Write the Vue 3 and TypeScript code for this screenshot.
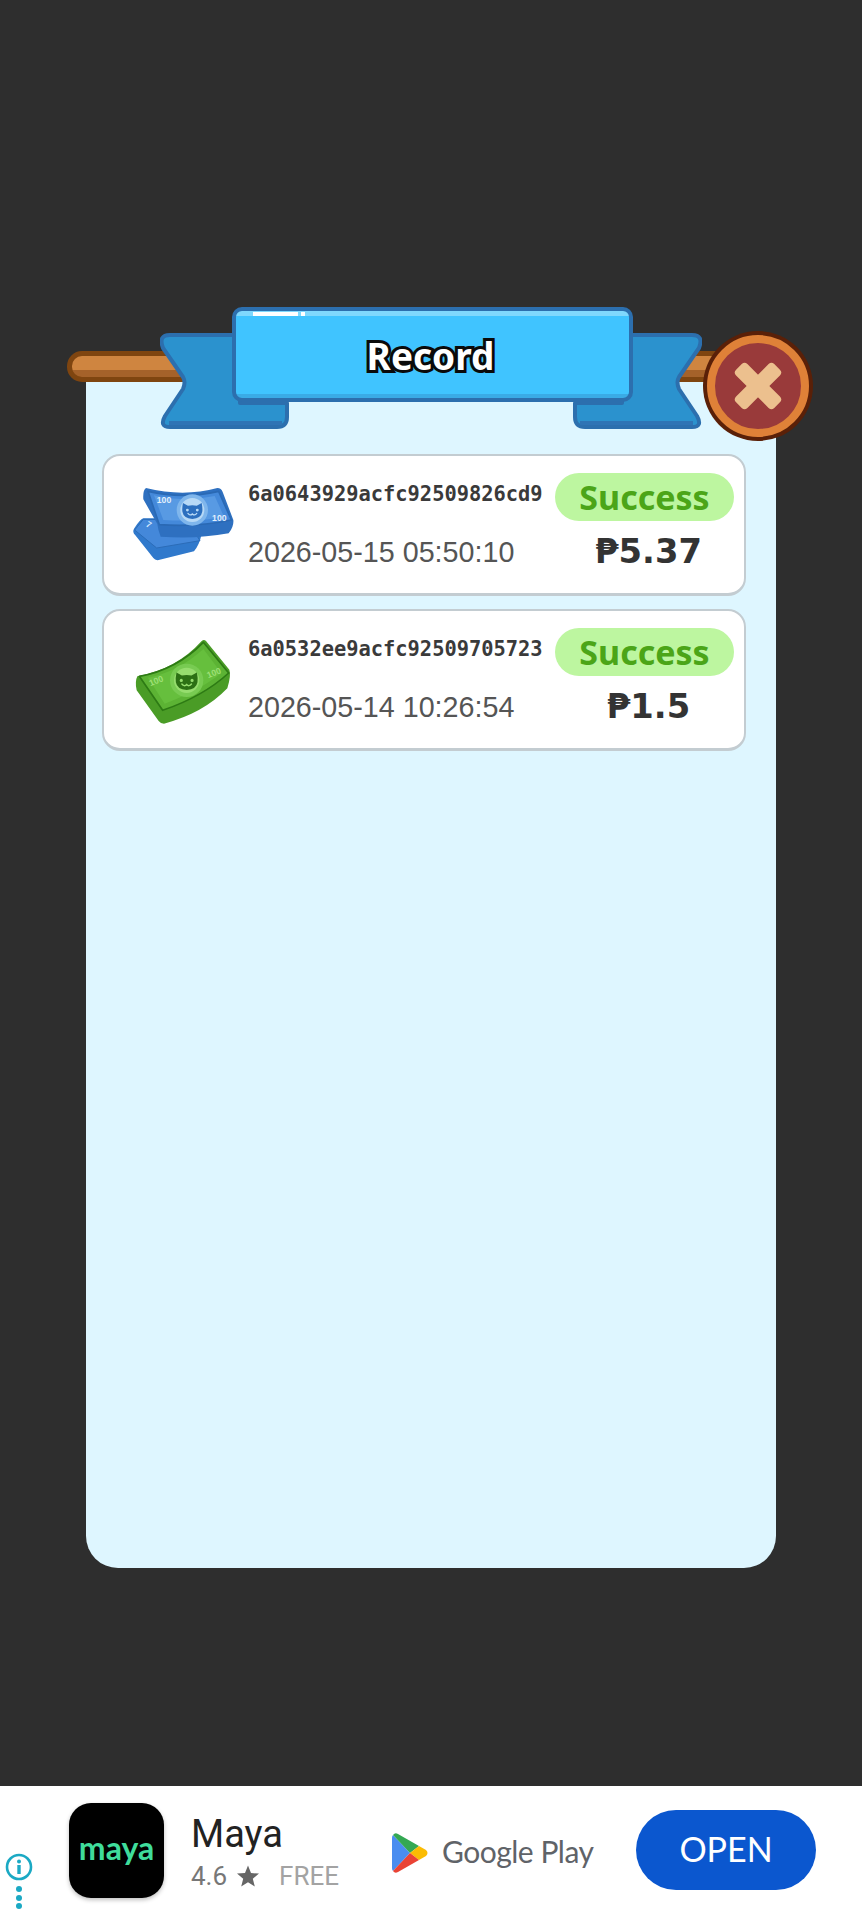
<script setup lang="ts">
interface RecordRow {
  id: string
  time: string
  amount: string
  tone: 'blue' | 'green'
}
const rows: RecordRow[] = [
  { id: '6a0643929acfc92509826cd9', time: '2026-05-15 05:50:10', amount: '₱5.37', tone: 'blue' },
  { id: '6a0532ee9acfc92509705723', time: '2026-05-14 10:26:54', amount: '₱1.5', tone: 'green' },
]
const catPath = 'M-17 -14 L-8 -9 Q0 -11 8 -9 L17 -14 Q19 -4 18 2 Q16 14 0 15 Q-16 14 -18 2 Q-19 -4 -17 -14 Z'
const tailPath = 'M10 2H80V70H127V84Q127 94 117 94H10Q-1 94 5 83L23 56Q26 49 23 44L3 15Q-2 2 10 2Z'
</script>

<template>
  <div class="screen">
    <main class="stage">
      <section class="panel">
        <div class="rod"></div>
        <svg class="tails" width="542" height="96" viewBox="0 0 542 96">
          <g>
            <path class="tail" :d="tailPath" />
            <path class="tail-edge" d="M9 90H122" />
          </g>
          <g transform="translate(542 0) scale(-1 1)">
            <path class="tail" :d="tailPath" />
            <path class="tail-edge" d="M9 90H122" />
          </g>
        </svg>
        <header class="banner">
          <i class="shine"></i><i class="shine-dot"></i>
          <h1>Record</h1>
        </header>
        <button class="close" aria-label="Close">
          <svg width="60" height="60" viewBox="0 0 60 60">
            <g fill="#ecc08e" transform="rotate(45 30 30)">
              <rect x="3" y="22" width="54" height="16" rx="4" />
              <rect x="22" y="3" width="16" height="54" rx="4" />
            </g>
          </svg>
        </button>

        <article v-for="row in rows" :key="row.id" class="card">
          <svg class="bill" width="120" height="110" viewBox="0 0 360 330">
            <template v-if="row.tone === 'blue'">
              <path d="M70 145Q60 148 42 176Q36 186 46 196L100 264Q106 272 116 270L222 244Q238 225 244 196L200 145Z" fill="#3079cc" />
              <path d="M70 148L44 180L110 234L240 212L200 150Z" fill="#4488da" stroke="#2b6cb8" stroke-width="3" stroke-linejoin="round" />
              <path d="M78 54Q190 82 292 54Q304 54 308 66L340 150Q342 170 326 190Q230 208 122 200Q114 180 112 162L70 88Q68 60 78 54Z" fill="#2e70c0" />
              <path d="M84 64Q190 88 296 64L334 150Q230 172 118 164Z" fill="#4489da" stroke="#2a69b4" stroke-width="5" stroke-linejoin="round" />
              <path d="M102 76Q190 98 284 78L312 140Q230 156 130 150Z" fill="#589ae3" />
              <circle cx="217" cy="120" r="47" fill="#7fb6ec" />
              <circle cx="217" cy="120" r="36" fill="#b7d9f6" />
              <g transform="translate(217 122) scale(1.65)">
                <path :d="catPath" fill="#2c6fbe" />
                <path d="M-8 5Q-4 10 0 6Q4 10 8 5" fill="none" stroke="#b7d9f6" stroke-width="2.4" stroke-linecap="round" />
                <circle cx="-9" cy="-1" r="2.6" fill="#b7d9f6" /><circle cx="9" cy="-1" r="2.6" fill="#b7d9f6" />
              </g>
              <text x="132" y="98" class="note" fill="#e2f0fd">100</text>
              <text x="298" y="152" class="note" fill="#e2f0fd">100</text>
              <text x="82" y="172" class="note" fill="#d3e7fb" transform="rotate(30 82 172)">7</text>
            </template>
            <template v-else>
              <path d="M52 154Q170 132 245 48Q252 42 258 48L328 134Q334 150 322 190Q250 265 132 296Q122 296 116 288L50 196Q44 170 52 154Z" fill="#4a9c26" />
              <path d="M58 154Q170 134 250 52L326 144Q250 214 128 256Z" fill="#5cb334" stroke="#2d7a14" stroke-width="5" stroke-linejoin="round" />
              <path d="M84 158Q176 140 250 72L304 144Q240 196 134 236Z" fill="#66bf3d" />
              <circle cx="200" cy="166" r="50" fill="#78cb52" />
              <circle cx="200" cy="166" r="38" fill="#96dd6e" />
              <g transform="translate(200 168) scale(1.8)">
                <path :d="catPath" fill="#2c7014" />
                <path d="M-8 5Q-4 10 0 6Q4 10 8 5" fill="none" stroke="#96dd6e" stroke-width="2.4" stroke-linecap="round" />
                <circle cx="-9" cy="-1" r="2.6" fill="#96dd6e" /><circle cx="9" cy="-1" r="2.6" fill="#96dd6e" />
              </g>
              <text x="112" y="176" class="note" fill="#9fe077" transform="rotate(-22 112 176)">100</text>
              <text x="285" y="152" class="note" fill="#9fe077" transform="rotate(-22 285 152)">100</text>
            </template>
          </svg>
          <div class="info">
            <p class="hash">{{ row.id }}</p>
            <p class="time">{{ row.time }}</p>
          </div>
          <div class="result">
            <span class="status">Success</span>
            <span class="amount">{{ row.amount }}</span>
          </div>
        </article>
      </section>
    </main>

    <footer class="ad">
      <div class="ad-marks">
        <svg width="28" height="28" viewBox="0 0 28 28">
          <circle cx="14" cy="14" r="12" fill="none" stroke="#1ba9c4" stroke-width="2.6" />
          <circle cx="14" cy="8.5" r="2" fill="#1ba9c4" />
          <path d="M14 12V21" fill="none" stroke="#1ba9c4" stroke-width="3.4" />
        </svg>
        <div class="dots"><i></i><i></i><i></i></div>
      </div>
      <div class="app-icon"><span>maya</span></div>
      <div class="app-info">
        <div class="app-name">Maya</div>
        <div class="app-meta">
          <span>4.6</span>
          <svg width="24" height="24" viewBox="0 0 24 24"><path d="M12 1.5L15 9L23 9.6L16.8 14.8L18.8 22.6L12 18.3L5.2 22.6L7.2 14.8L1 9.6L9 9Z" fill="#666" /></svg>
          <span class="free">FREE</span>
        </div>
      </div>
      <div class="play">
        <svg width="37" height="40" viewBox="0 0 37 40">
          <path d="M1 2Q0 3 0 5V35Q0 37 1 38L18 20Z" fill="#4a8df0" />
          <path d="M1 2Q3 -1 6 1L27 13L18 20Z" fill="#34a853" />
          <path d="M27 13L34 17Q37 20 34 23L27 27L18 20Z" fill="#fbbc04" />
          <path d="M1 38Q3 41 6 39L27 27L18 20Z" fill="#ea4335" />
        </svg>
        <span>Google Play</span>
      </div>
      <button class="open">OPEN</button>
    </footer>
  </div>
</template>

<style scoped>
.screen {
  width: 862px;
  height: 1920px;
  display: flex;
  flex-direction: column;
  background: #2e2e2e;
  overflow: hidden;
}
.stage {
  flex: 1;
  padding: 382px 0 0 86px;
}
.panel {
  position: relative;
  box-sizing: border-box;
  width: 690px;
  height: 1186px;
  padding: 72px 30px 0 16px;
  display: flex;
  flex-direction: column;
  gap: 13px;
  background: #def6ff;
  border-radius: 0 0 32px 32px;
}
.rod {
  position: absolute;
  left: -19px;
  top: -31px;
  width: 660px;
  height: 31px;
  box-sizing: border-box;
  background: linear-gradient(#cf8540 0 68%, #a5622a 68%);
  border: 5px solid #7f4510;
  border-radius: 15px 0 0 15px;
}
.tails {
  position: absolute;
  left: 74px;
  top: -49px;
}
.tail {
  fill: #2b92ce;
  stroke: #2c6fae;
  stroke-width: 4;
  stroke-linejoin: round;
}
.tail-edge {
  fill: none;
  stroke: #2f74b5;
  stroke-width: 4;
}
.banner {
  position: absolute;
  left: 146px;
  top: -75px;
  box-sizing: border-box;
  width: 401px;
  height: 95px;
  display: flex;
  align-items: center;
  justify-content: center;
  background: linear-gradient(#7fd8fd 0 5px, #40c4ff 5px calc(100% - 4px), #3aabe6 calc(100% - 4px));
  border: 4px solid #2c6fae;
  border-radius: 10px;
}
.shine {
  position: absolute;
  left: 17px;
  top: 1px;
  width: 45px;
  height: 4px;
  background: #fff;
}
.shine-dot {
  position: absolute;
  left: 65px;
  top: 1px;
  width: 4px;
  height: 4px;
  background: #fff;
}
.banner h1 {
  margin: 2px 4px 0 0;
  font: 700 37px/1 "Noto Sans", sans-serif;
  color: #fff;
  -webkit-text-stroke: 6px #0a0a0a;
  paint-order: stroke fill;
}
.close {
  position: absolute;
  left: 621px;
  top: -47px;
  box-sizing: border-box;
  width: 102px;
  height: 102px;
  padding: 0;
  display: flex;
  align-items: center;
  justify-content: center;
  background: #993a3a;
  border: 8px solid #df8138;
  border-radius: 50%;
  box-shadow: 0 0 0 4px #5a2008;
}
.card {
  box-sizing: border-box;
  height: 142px;
  display: flex;
  align-items: flex-start;
  padding-left: 16px;
  background: #fff;
  border: 2px solid #c3ccd1;
  border-bottom-width: 3px;
  border-radius: 18px;
}
.bill {
  flex: none;
  margin-top: 14px;
}
.note {
  font: 700 26px "Liberation Sans", sans-serif;
  text-anchor: middle;
}
.info {
  width: 307px;
  margin-left: 8px;
  padding-top: 25px;
  flex: none;
}
.hash {
  margin: 0 0 28px;
  font: 700 20.4px/26px "DejaVu Sans Mono", monospace;
  color: #3a3a3a;
  white-space: nowrap;
}
.time {
  margin: 0;
  font: 400 28.7px/34px "Liberation Sans", sans-serif;
  color: #555;
  white-space: nowrap;
}
.result {
  width: 179px;
  padding-top: 17px;
  display: flex;
  flex-direction: column;
  align-items: center;
  gap: 9px;
}
.status {
  width: 100%;
  height: 48px;
  display: flex;
  align-items: center;
  justify-content: center;
  background: #bdf6a0;
  border-radius: 24px;
  font: 700 34px/1 "Noto Sans", sans-serif;
  color: #4ba518;
}
.amount {
  margin-left: 8px;
  font: 700 33.8px/44px "DejaVu Sans", sans-serif;
  color: #333;
}
.ad {
  box-sizing: border-box;
  height: 134px;
  flex: none;
  display: flex;
  align-items: center;
  position: relative;
  background: #fff;
}
.ad-marks {
  position: absolute;
  left: 5px;
  top: 67px;
  display: flex;
  flex-direction: column;
  align-items: center;
  gap: 5px;
}
.dots {
  display: flex;
  flex-direction: column;
  gap: 2.5px;
}
.dots i {
  width: 6px;
  height: 6px;
  border-radius: 50%;
  background: #1ba9c4;
}
.app-icon {
  width: 95px;
  height: 95px;
  margin: -5px 0 0 69px;
  display: flex;
  align-items: center;
  justify-content: center;
  background: #000;
  border-radius: 22px;
  box-shadow: 0 2px 4px rgba(0, 0, 0, 0.25);
}
.app-icon span {
  margin-top: -6px;
  font: 700 32px/1 "Lato", sans-serif;
  color: #3fdc9b;
}
.app-info {
  width: 200px;
  margin: -1px 0 0 27px;
}
.app-name {
  margin-top: -3px;
  font: 400 38px/44px "Roboto", sans-serif;
  color: #222;
}
.app-meta {
  display: flex;
  align-items: center;
  gap: 9px;
  margin-top: 5px;
  font: 400 26px/30px "Roboto", sans-serif;
  color: #777;
}
.free {
  margin-left: 10px;
  color: #a3a3a3;
}
.play {
  display: flex;
  align-items: center;
  gap: 13px;
  margin-left: 1px;
  font: 400 30px/1 "Lato", sans-serif;
  letter-spacing: -0.5px;
  color: #5f6368;
}
.play span {
  margin-top: -5px;
}
.open {
  position: absolute;
  left: 636px;
  top: 24px;
  width: 180px;
  height: 80px;
  border: 0;
  padding: 0 0 2px;
  border-radius: 40px;
  background: #0b57cf;
  color: #fff;
  font: 400 34px/1 "Lato", sans-serif;
}
</style>

<style>
html, body { background: #2e2e2e; }
</style>
